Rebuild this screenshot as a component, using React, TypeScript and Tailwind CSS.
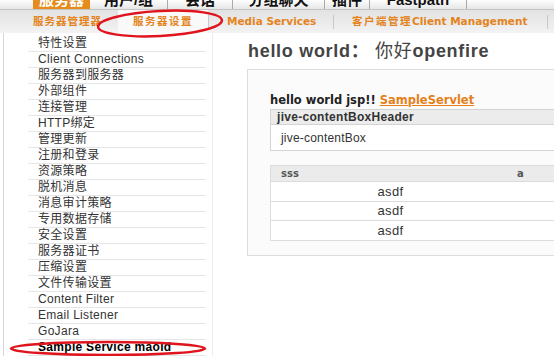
import React from 'react';

const topTabs = [
  { label: '服务器', w: 'w-[57px]', active: true },
  { label: '用户/组', w: 'w-[78px]', active: false },
  { label: '会话', w: 'w-[65px]', active: false },
  { label: '分组聊天', w: 'w-[92px]', active: false },
  { label: '插件', w: 'w-[45px]', active: false },
  { label: 'Fastpath', w: 'w-[97px]', active: false },
];

const sideItems = [
  '特性设置',
  'Client Connections',
  '服务器到服务器',
  '外部组件',
  '连接管理',
  'HTTP绑定',
  '管理更新',
  '注册和登录',
  '资源策略',
  '脱机消息',
  '消息审计策略',
  '专用数据存储',
  '安全设置',
  '服务器证书',
  '压缩设置',
  '文件传输设置',
  'Content Filter',
  'Email Listener',
  'GoJara',
  'Sample Service maoid',
];

const rows = ['asdf', 'asdf', 'asdf'];

export default function App() {
  return (
    <div className="relative w-[554px] h-[356px] overflow-hidden bg-white font-['Liberation_Sans','Noto_Sans_CJK_SC',sans-serif]">
      {/* main tabs, cut off at the top */}
      <div className="flex h-[10px] overflow-hidden border-b border-[#c4c4c4] bg-gradient-to-b from-[#fdfdfd] to-[#e6e6e6]">
        <div className="w-[33px] shrink-0" />
        {topTabs.map((t) => (
          <div
            key={t.label}
            className={`${t.w} shrink-0 flex justify-center ${t.active ? 'bg-[#e58c1c] text-white' : 'border-r border-[#a9a9a9] text-[#111]'}`}
          >
            <span className="-mt-[8px] text-[15px] leading-[15px] font-bold whitespace-nowrap">{t.label}</span>
          </div>
        ))}
      </div>

      {/* sub tabs */}
      <div className="flex items-center h-[23px] bg-gradient-to-b from-[#e2e2e2] to-[#f3f3f3] text-[#e4831c] font-['DejaVu_Sans','Noto_Sans_CJK_SC',sans-serif] font-bold text-[10.5px] whitespace-nowrap">
        <div className="w-[33px] shrink-0" />
        <div className="w-[85px] shrink-0 tracking-[1px]">服务器管理器</div>
        <div className="w-[90px] shrink-0 h-full flex items-center justify-center bg-[#f9f9f9] tracking-[1.5px]">服务器设置</div>
        <span className="w-px h-[14px] bg-[#c8c8c8] shrink-0" />
        <div className="w-[124px] shrink-0 pl-[18px]">Media Services</div>
        <span className="w-px h-[14px] bg-[#c8c8c8] shrink-0" />
        <div className="w-[213px] shrink-0 pl-[18px]">
          <span className="tracking-[1.5px]">客户端管理</span>Client Management
        </div>
        <span className="w-px h-[14px] bg-[#c8c8c8] shrink-0" />
      </div>

      <div className="flex">
        {/* sidebar */}
        <div className="w-[212px] shrink-0 pl-[3px] flex">
          <div className="border-l border-[#d6d6d6] pl-[24px] pt-[3px] w-[203px]">
            {sideItems.map((s, i) => (
              <div
                key={s}
                className={`h-[16px] border-b border-[#e6e6e6] pl-[10px] text-[12px] leading-[15px] tracking-[0.3px] whitespace-nowrap ${
                  i === sideItems.length - 1 ? 'font-bold text-black' : 'text-[#333]'
                }`}
              >
                {s}
              </div>
            ))}
          </div>
        </div>

        {/* content */}
        <div className="min-w-0 flex-1 border-l border-[#ececec] pl-[34px] pt-[9px]">
          <h1 className="ml-[1px] text-[18px] leading-[18px] font-bold text-[#444] tracking-[0.7px] whitespace-nowrap">
            hello world： <span className="font-normal">你好</span>openfire
          </h1>

          <div className="mt-[9px] w-[340px] border border-[#dcdcdc] bg-[#fbfbfb] pl-[22px] pt-[24px] pb-[14px]">
            <div className="font-['DejaVu_Sans',sans-serif] font-bold text-[11.5px] leading-[12px] text-[#222] whitespace-nowrap">
              hello world jsp!!{' '}
              <span className="text-[#e4801a] underline">SampleServlet</span>
            </div>

            <div className="mt-[3px] border border-[#d4d4d4] bg-white">
              <div className="h-[15px] bg-[#ececec] border-b border-[#d4d4d4] pl-[6px] text-[12px] leading-[15px] font-bold text-[#333] tracking-[0.3px]">
                jive-contentBoxHeader
              </div>
              <div className="h-[25px] pl-[10px] flex items-center text-[12px] text-[#333] tracking-[0.2px]">
                jive-contentBox
              </div>
            </div>

            <div className="mt-[14px] border-l border-t border-[#dcdcdc] bg-white">
              <div className="flex h-[16px] bg-[#ebebeb] border-b border-[#dcdcdc] items-center font-['DejaVu_Sans',sans-serif] font-bold text-[10px] text-[#555]">
                <div className="w-[239px] pl-[10px]">sss</div>
                <div className="pl-[7px]">a</div>
              </div>
              {rows.map((r, i) => (
                <div key={i} className="flex h-[19.5px] border-b border-[#dcdcdc] items-center text-[13px] text-[#333] tracking-[0.4px]">
                  <div className="w-[239px] text-center">{r}</div>
                  <div />
                </div>
              ))}
            </div>
          </div>
        </div>
      </div>

      {/* hand-drawn red marks */}
      <svg className="absolute left-0 top-0 pointer-events-none" width="554" height="356">
        <ellipse cx="160" cy="23.5" rx="62" ry="12.5" transform="rotate(-3 160 23.5)" fill="none" stroke="#e0141c" strokeWidth="2.5" />
        <ellipse cx="108" cy="348.5" rx="97" ry="6.5" fill="none" stroke="#e0141c" strokeWidth="2.5" />
      </svg>
    </div>
  );
}
